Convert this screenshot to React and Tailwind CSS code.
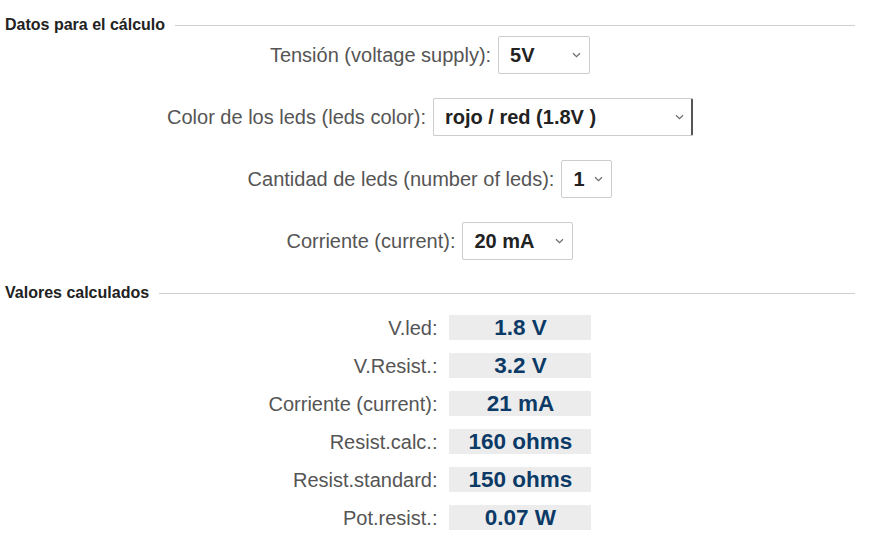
import React, { useState } from "react";

const font = { fontFamily: '"Liberation Sans", Arial, sans-serif' };

function Legend({ children }) {
  return (
    <div className="flex items-center gap-[10px]">
      <span className="text-[16px] font-bold leading-[18px] text-[#222]">{children}</span>
      <div className="h-px flex-1 bg-[#cfcfcf]" />
    </div>
  );
}

function Chevron() {
  return (
    <svg width="9" height="6" viewBox="0 0 9 6" className="pointer-events-none absolute right-[9px] top-1/2 -translate-y-1/2">
      <path d="M1 1.2 L4.5 4.6 L8 1.2" fill="none" stroke="#6b6b6b" strokeWidth="1.2" />
    </svg>
  );
}

function Field({ label, value, options, onChange, width, darkRight }) {
  return (
    <div className="flex h-[38px] items-center justify-center gap-[7px]">
      <label className="text-[20px] text-[#555]">{label}</label>
      <div className="relative h-[38px]" style={{ width }}>
        <select
          value={value}
          onChange={(e) => onChange(e.target.value)}
          className={
            "h-full w-full appearance-none rounded-[2px] border border-[#cccccc] bg-white pl-[11px] pr-6 text-[20px] font-bold text-[#222] outline-none " +
            (darkRight ? "border-r-2 border-r-[#555]" : "")
          }
          style={font}
        >
          {options.map((o) => (
            <option key={o} value={o}>
              {o}
            </option>
          ))}
        </select>
        <Chevron />
      </div>
    </div>
  );
}

const results = [
  ["V.led:", "1.8 V"],
  ["V.Resist.:", "3.2 V"],
  ["Corriente (current):", "21 mA"],
  ["Resist.calc.:", "160 ohms"],
  ["Resist.standard:", "150 ohms"],
  ["Pot.resist.:", "0.07 W"],
];

export default function App() {
  const [volt, setVolt] = useState("5V");
  const [color, setColor] = useState("rojo / red (1.8V )");
  const [qty, setQty] = useState("1");
  const [current, setCurrent] = useState("20 mA");

  return (
    <div className="h-[560px] w-[870px] bg-white pl-[5px] pr-[15px] pt-[16px]" style={font}>
      <Legend>Datos para el cálculo</Legend>

      <div className="mt-[2px] flex flex-col gap-[24px]">
        <Field label="Tensión (voltage supply):" value={volt} onChange={setVolt} width={92} options={["3V", "5V", "9V", "12V", "24V"]} />
        <Field
          label="Color de los leds (leds color):"
          value={color}
          onChange={setColor}
          width={260}
          darkRight
          options={["rojo / red (1.8V )", "verde / green (2.1V )", "azul / blue (3.2V )", "blanco / white (3.3V )"]}
        />
        <Field label="Cantidad de leds (number of leds):" value={qty} onChange={setQty} width={51} options={["1", "2", "3", "4", "5"]} />
        <Field label="Corriente (current):" value={current} onChange={setCurrent} width={111} options={["10 mA", "15 mA", "20 mA", "25 mA", "30 mA"]} />
      </div>

      <div className="mt-[24px]">
        <Legend>Valores calculados</Legend>
      </div>

      <div className="mx-auto mt-[13px] grid w-fit grid-cols-[auto_142px] gap-x-[12px] gap-y-[13px]">
        {results.map(([k, v]) => (
          <React.Fragment key={k}>
            <div className="flex h-[25px] items-center justify-end text-[20px] text-[#555]">{k}</div>
            <div className="flex h-[25px] items-center justify-center bg-[#ececec] text-[22.5px] font-bold text-[#0b3a66]">{v}</div>
          </React.Fragment>
        ))}
      </div>
    </div>
  );
}
